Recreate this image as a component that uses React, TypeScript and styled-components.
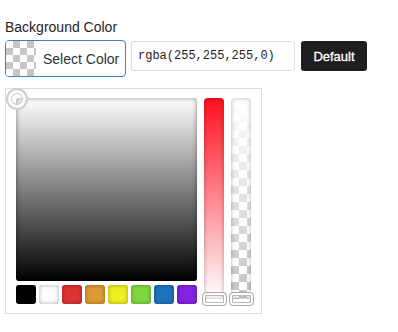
import styled, { createGlobalStyle, css } from 'styled-components';

const GlobalStyle = createGlobalStyle`
  body {
    margin: 0;
    background: #fff;
    font-family: "Liberation Sans", Arial, sans-serif;
    color: #1e1e1e;
  }
`;

const checker = (size: number, dark: string) => css`
  background-image: linear-gradient(45deg, ${dark} 25%, transparent 25%, transparent 75%, ${dark} 75%),
    linear-gradient(45deg, ${dark} 25%, transparent 25%, transparent 75%, ${dark} 75%);
  background-size: ${size * 2}px ${size * 2}px;
  background-position: 0 0, ${size}px ${size}px;
`;

const SWATCHES = ['#000000', '#ffffff', '#dd3333', '#dd9933', '#eeee22', '#81d742', '#1e73be', '#8224e3'];

const Page = styled.div`
  padding: 17px 0 0 5px;
`;

const Label = styled.div`
  font-size: 14px;
  line-height: 20px;
  margin-bottom: 3px;
`;

const Controls = styled.div`
  display: flex;
  align-items: flex-start;
`;

const SelectButton = styled.button`
  display: flex;
  align-items: center;
  box-sizing: border-box;
  width: 121px;
  height: 37px;
  padding: 0;
  border: 1px solid #3582c4;
  border-radius: 4px;
  background: #fff;
  overflow: hidden;
  font-family: inherit;
  font-size: 14px;
  color: #2c3338;
`;

const Chip = styled.span`
  width: 30px;
  height: 100%;
  background-color: #fff;
  ${checker(7, '#c6c6c6')}
  margin-right: 7px;
  flex-shrink: 0;
`;

const ValueInput = styled.input`
  box-sizing: border-box;
  width: 164px;
  height: 30px;
  margin: 1px 0 0 5px;
  padding: 0 6px;
  border: 1px solid #dcdcde;
  border-radius: 3px;
  font-family: "Liberation Mono", "Courier New", monospace;
  font-size: 12px;
  color: #1e1e1e;
  outline: none;
`;

const DefaultButton = styled.button`
  box-sizing: border-box;
  height: 30px;
  width: 66px;
  margin: 1px 0 0 6px;
  border: none;
  border-radius: 3px;
  background: #1e1e1e;
  color: #fff;
  font-family: inherit;
  font-size: 13px;
  -webkit-text-stroke: 0.3px #fff;
`;

const Picker = styled.div`
  box-sizing: border-box;
  width: 257px;
  margin-top: 11px;
  padding: 9px 10px;
  border: 1px solid #dcdcde;
  display: flex;
  gap: 7px;
`;

const MainColumn = styled.div`
  display: flex;
  flex-direction: column;
  gap: 4px;
  width: 181px;
`;

const Square = styled.div`
  position: relative;
  height: 183px;
  border-radius: 3px;
  background: linear-gradient(to bottom, #ffffff, #000000);
  box-shadow: inset 0 0 5px rgba(0, 0, 0, 0.45);
`;

const SquareHandle = styled.span`
  position: absolute;
  left: -10px;
  top: -10px;
  box-sizing: border-box;
  width: 22px;
  height: 22px;
  border-radius: 50%;
  border: 2px solid #cfcfcf;
  box-shadow: inset 0 0 0 3px #fff, inset 0 0 0 4px #c8c8c8;
`;

const SwatchRow = styled.div`
  display: flex;
  gap: 3px;
`;

const Swatch = styled.span<{ color: string }>`
  width: 20px;
  height: 19px;
  border-radius: 3px;
  background: ${p => p.color};
  box-shadow: inset 0 0 4px rgba(0, 0, 0, 0.35);
`;

const Strip = styled.div<{ kind: 'hue' | 'alpha' }>`
  position: relative;
  width: 20px;
  height: 201px;
  border-radius: 4px;
  ${p =>
    p.kind === 'hue'
      ? css`
          background: linear-gradient(to bottom, #ff0f1e, #ffffff);
        `
      : css`
          background-color: #fff;
          background-image: linear-gradient(to bottom, #ffffff, rgba(255, 255, 255, 0)),
            linear-gradient(45deg, #c4c4c4 25%, transparent 25%, transparent 75%, #c4c4c4 75%),
            linear-gradient(45deg, #c4c4c4 25%, transparent 25%, transparent 75%, #c4c4c4 75%);
          background-size: 100% 100%, 16px 16px, 16px 16px;
          background-position: 0 0, 0 0, 8px 8px;
        `}
  box-shadow: inset 0 0 4px rgba(0, 0, 0, 0.3);
`;

const StripHandle = styled.span`
  position: absolute;
  left: -2px;
  top: 194px;
  box-sizing: border-box;
  width: 25px;
  height: 14px;
  border-radius: 4px;
  border: 1px solid #a7a7a7;
  box-shadow: inset 0 0 0 2px #fff, inset 0 0 0 3px #b8b8b8;
`;

export default function App() {
  return (
    <Page>
      <GlobalStyle />
      <Label>Background Color</Label>
      <Controls>
        <SelectButton>
          <Chip />
          Select Color
        </SelectButton>
        <ValueInput value="rgba(255,255,255,0)" readOnly />
        <DefaultButton>Default</DefaultButton>
      </Controls>
      <Picker>
        <MainColumn>
          <Square>
            <SquareHandle />
          </Square>
          <SwatchRow>
            {SWATCHES.map(c => (
              <Swatch key={c} color={c} />
            ))}
          </SwatchRow>
        </MainColumn>
        <Strip kind="hue">
          <StripHandle />
        </Strip>
        <Strip kind="alpha">
          <StripHandle />
        </Strip>
      </Picker>
    </Page>
  );
}
